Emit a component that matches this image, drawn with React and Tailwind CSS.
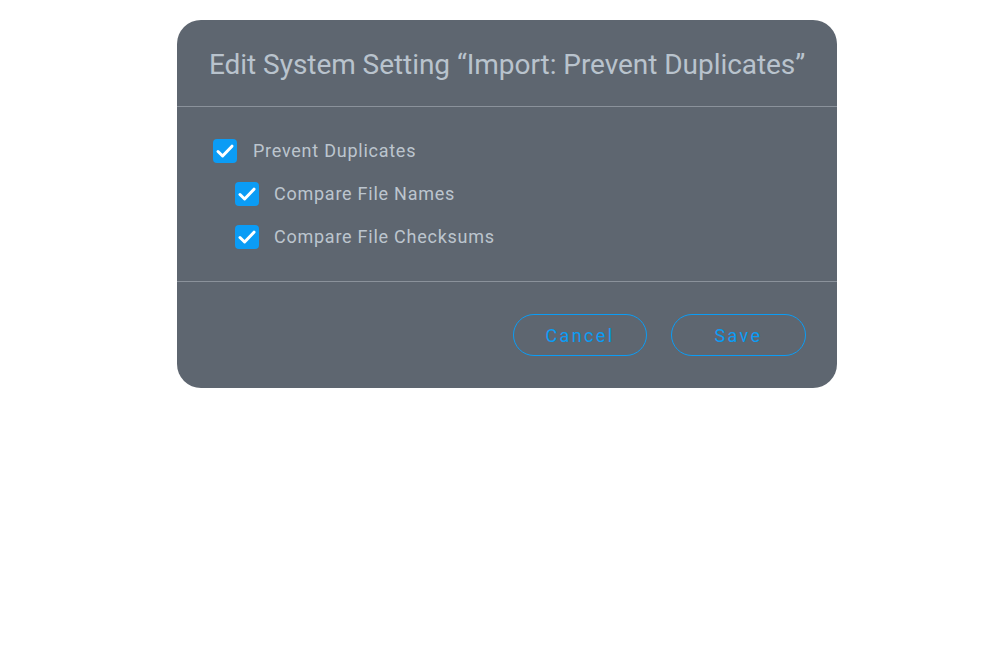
import React from "react";

function Check({ className = "" }) {
  return (
    <span className={"flex h-6 w-6 shrink-0 items-center justify-center rounded-[4px] bg-[#0b9cf5] " + className}>
      <svg width="24" height="24" viewBox="0 0 24 24" fill="none">
        <path d="M5 12.5 L9.6 17 L19 7.2" stroke="white" strokeWidth="3" strokeLinecap="round" strokeLinejoin="round" />
      </svg>
    </span>
  );
}

export default function App() {
  return (
    <div className="min-h-screen w-full bg-white" style={{ fontFamily: "Roboto, 'Liberation Sans', sans-serif" }}>
      <div className="pt-5 pl-[177px]">
        <div className="w-[660px] rounded-[24px] bg-[#5e6670]">
          <div className="flex h-[87px] items-center border-b border-[#8b929b] pl-8 pt-1">
            <h1 className="text-[28px] font-normal leading-[32px] tracking-[-0.05px] text-[#b9c3cd]">
              Edit System Setting “Import: Prevent Duplicates”
            </h1>
          </div>
          <div className="flex flex-col gap-[19px] pl-9 pt-8 pb-8">
            <label className="flex items-center gap-4">
              <Check />
              <span className="text-[18px] leading-[24px] tracking-[0.75px] text-[#bcc5ce]">Prevent Duplicates</span>
            </label>
            <label className="ml-[22px] flex items-center gap-[15px]">
              <Check />
              <span className="text-[18px] leading-[24px] tracking-[0.75px] text-[#bcc5ce]">Compare File Names</span>
            </label>
            <label className="ml-[22px] flex items-center gap-[15px]">
              <Check />
              <span className="text-[18px] leading-[24px] tracking-[0.75px] text-[#bcc5ce]">Compare File Checksums</span>
            </label>
          </div>
          <div className="flex justify-end gap-6 border-t border-[#8b929b] pt-8 pb-8 pr-[31px]">
            <button className="h-[42px] w-[134px] rounded-full border-[1.5px] border-[#0b9cf5] text-[18px] font-normal tracking-[2.4px] text-[#0b9cf5]">
              Cancel
            </button>
            <button className="h-[42px] w-[135px] rounded-full border-[1.5px] border-[#0b9cf5] text-[18px] font-normal tracking-[2.4px] text-[#0b9cf5]">
              Save
            </button>
          </div>
        </div>
      </div>
    </div>
  );
}
